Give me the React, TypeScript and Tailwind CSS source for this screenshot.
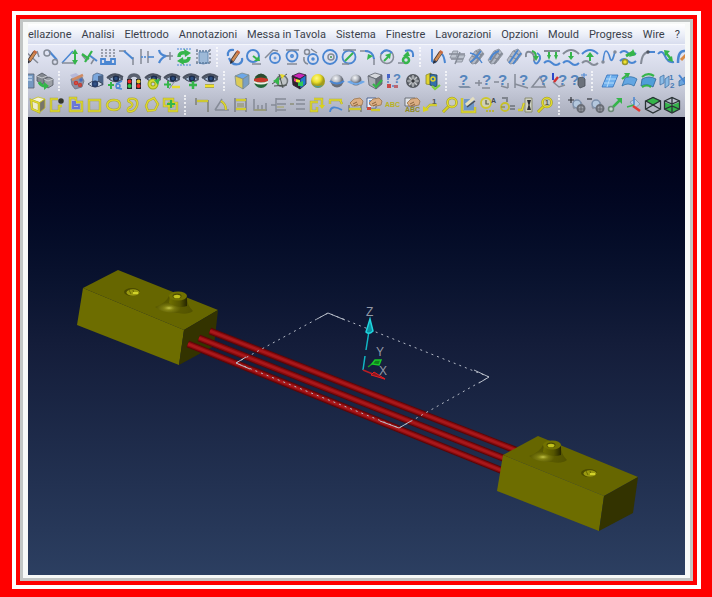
import type { ReactNode } from "react";

type Tool = {
  label: string;
  art: ReactNode;
};

const BLUE = "#4a86d2";
const GRAY = "#858b97";
const GREEN = "#35b54a";
const YELLOW = "#d9d31c";
const OLIVE = "#98952c";

const Line = ({ d, c = BLUE, w = 1.5, dash }: { d: string; c?: string; w?: number; dash?: string }) => (
  <path d={d} fill="none" stroke={c} strokeWidth={w} strokeDasharray={dash} />
);

const Fill = ({ d, c = BLUE, s }: { d: string; c?: string; s?: string }) => (
  <path d={d} fill={c} stroke={s} strokeWidth={s ? 0.8 : undefined} />
);

const Ring = ({ x, y, r, c = BLUE, f = "none", w = 1.5 }: { x: number; y: number; r: number; c?: string; f?: string; w?: number }) => (
  <circle cx={x} cy={y} r={r} fill={f} stroke={c} strokeWidth={w} />
);

const Label = ({ x, y, size, c, children }: { x: number; y: number; size: number; c: string; children: string }) => (
  <text x={x} y={y} fontSize={size} fill={c} fontWeight="bold" fontFamily="Liberation Sans, sans-serif">
    {children}
  </text>
);

const Pencil = () => (
  <>
    <Line d="M6 13L12 4" c="#4b3a33" w={4} />
    <Line d="M6.500 12.500L12 4.500" c="#d08a52" w={2.500} />
    <Line d="M11.500 5L12.800 3" c="#c9683f" w={3.500} />
    <Fill d="M4 16l.5-4 3 2z" c="#2c2c34" />
  </>
);

const Eye = () => (
  <>
    <Fill d="M1 6Q8-2 17 5L17 8Q13 11 8 10Q4 9 1 6z" c="#5f6777" />
    <Fill d="M3 7Q9 2 16 7Q10 12 3 7z" c="#a9c0dc" s="#3a4253" />
    <Ring x={10} y={6.500} r={2.500} c="#1d2c4a" f="#2b4d80" />
    <Line d="M1 6Q8-1 17 5" c="#4a5160" w={1.800} />
  </>
);

const Cube = ({ top = "#d5d7dc", left = "#a9acb4", right = "#6c7078", edge = "#5e636d" }) => (
  <>
    <Fill d="M2 4L9 1L16 3L10 7z" c={top} s={edge} />
    <Fill d="M2 4L10 7V17L3 13z" c={left} s={edge} />
    <Fill d="M10 7L16 3V12L10 17z" c={right} s={edge} />
  </>
);

const Hand = () => (
  <>
    <Fill d="M4 7L8 3L14 2L17 5L16 9L11 10L6 10L5 8z" c="#dcae83" s="#9b754e" />
    <Line d="M7 8L11 6M8 10L12 8" c="#8a643e" w={1} />
  </>
);

const Wave = ({ y, c = BLUE }: { y: number; c?: string }) => (
  <Line d={`M1 ${y}q4 -4 8 0t8 0`} c={c} w={2} />
);

const Band = ({ c }: { c: string }) => (
  <>
    <Fill d="M2 12L8 3L13 1L17 6L10 15L5 16z" c="#b4bac6" s={GRAY} />
    <Line d="M5 8L13 12M9 3L15 8" c={GRAY} w={1.200} />
    <Line d="M4 15L13 2M8 16L16 5" c={c} w={1.800} />
  </>
);

const Lens = () => (
  <>
    <Line d="M8 10L2 16" c={OLIVE} w={3} />
    <Line d="M8 10L2 16" c={YELLOW} w={1.800} />
    <Ring x={11} y={6.500} r={4.500} c={OLIVE} f="#c7c9c2" w={2.500} />
    <Ring x={11} y={6.500} r={4.500} c="#e3dc2a" w={1.500} />
  </>
);

const Gears = () => (
  <>
    <Line d="M5 12L14 7" c="#8e939d" w={3} />
    <Ring x={9} y={8} r={4} c="#7c90ab" f="#b4c8de" />
    <Ring x={13} y={12.500} r={3.500} c="#6a6e77" f="#a4a8b0" w={2} />
    <Line d="M13 9V17M9 13H17" c="#62666f" w={1} />
  </>
);

const Yellow = ({ d }: { d: string }) => (
  <>
    <Line d={d} c="#a5a23c" w={2.400} />
    <Line d={d} c="#e0d92c" w={1.400} />
  </>
);

const Query = ({ x }: { x: number }) => (
  <Label x={x} y={13} size={15} c="#5585bd">
    ?
  </Label>
);

const rowOne: Tool[][] = [
  [
    { label: "Schizzo", art: <><Line d="M3 4L15 15M14 3L16 9" c={GRAY} /><Pencil /></> },
    { label: "Linea tangente", art: <><Line d="M7 3L15 12" w={2} /><Ring x={5} y={5} r={3} c={GRAY} /><Ring x={13} y={14} r={2.500} c={GRAY} /></> },
    { label: "Linea ad angolo", art: <><Line d="M1 15L12 3" /><Line d="M1 15H14" c={GRAY} /><Line d="M14 4V14" c={GREEN} w={2} /><Fill d="M11 6L14 1L17 6zM11 12L14 17L17 12z" c={GREEN} /></> },
    { label: "Normale", art: <><Line d="M9 7L17 13" w={2} /><Line d="M2 7L7 13M14 11L11 16" c={GRAY} /><Line d="M2 6L9 11M5 14L12 3" c={GREEN} w={2.200} /></> },
    { label: "Parallele", art: <><Line d="M3 1V10M7 1V10M11 1V10M15 1V10" c={GRAY} dash="2 1" /><Line d="M2 16V11H6V14H12V11H16V16z" w={1.800} /></> },
    { label: "Smusso", art: <><Line d="M1 3H8M15 9V17" c={GRAY} /><Line d="M6 3L15 11" w={2} /></> },
    { label: "Taglia", art: <><Line d="M4 1V16M11 3V15" c={GRAY} /><Line d="M4 9H10" dash="2 1" /><Line d="M11 9H17" w={1.600} /></> },
    { label: "Unisci", art: <><Line d="M3 2Q4 7 10 8Q5 10 3 15" w={2.200} /><Line d="M10 8H17M14 4V12" c={GRAY} /></> },
    { label: "Rigenera", art: <><Line d="M2 1H16M2 17H16" dash="2 1" w={1} /><Line d="M4 9Q4 4 10 5M14 9Q14 14 8 13" c={GREEN} w={3.500} /><Fill d="M9 1L16 5L10 9zM9 17L2 13L8 9z" c={GREEN} /></> },
    { label: "Solido", art: <><Fill d="M5 4H14V15Q9 17 5 15z" c="#9db9d8" s="#557da9" /><Line d="M2 3H17M2 15H17" c="#5e7c9e" dash="2 1" /><Line d="M3 1V17M16 1V17" c={GRAY} dash="2 2" /></> },
  ],
  [
    { label: "Disegna cerchio", art: <><Line d="M8 2Q1 1 2 8M3 10Q6 18 13 16Q17 14 16 10" w={2.200} /><Pencil /></> },
    { label: "Cerchio centro", art: <><Ring x={8} y={8} r={6} w={2} /><Line d="M8 8L12 11" c={GREEN} w={2} /><Fill d="M9 13L15 13L14 8z" c={GREEN} /><Line d="M7 16H16" c={GRAY} /></> },
    { label: "Cerchio tangente", art: <><Ring x={11} y={10} r={5} w={1.800} /><Ring x={11} y={10} r={1} w={1} /><Line d="M1 10L9 2L14 3" c={GRAY} /></> },
    { label: "Cerchio due linee", art: <><Ring x={9} y={8} r={5.500} w={1.800} /><Ring x={9} y={8} r={1.200} /><Line d="M3 2H16M4 16H14" c={GRAY} /></> },
    { label: "Cerchio tre cerchi", art: <><Ring x={11} y={11} r={5} w={1.800} /><Ring x={11} y={11} r={1} /><Ring x={5} y={4} r={2.500} c={GRAY} /><Line d="M2 9Q1 15 6 16M9 1L15 5" c={GRAY} /></> },
    { label: "Cerchi concentrici", art: <><Ring x={9} y={9} r={7} w={1.800} /><Ring x={10} y={9} r={3} c={GRAY} /><Fill d="M9 8h2v2h-2z" c="#69a874" /></> },
    { label: "Diametro", art: <><Ring x={9} y={9} r={6.500} w={1.800} /><Line d="M5 13L13 5" c={GREEN} w={2} /><Line d="M3 2H16M2 16H9" c={GRAY} /></> },
    { label: "Raccordo", art: <><Line d="M1 3H9M15 10V17" c={GRAY} /><Line d="M6 3Q14 3 15 11" w={2} /><Fill d="M8 12L9 6L14 8z" c={GREEN} /></> },
    { label: "Raggio", art: <><Ring x={9} y={9} r={6.500} c={GRAY} /><Line d="M3 6Q8-1 14 5" w={2} /><Line d="M6 13L10 9" c={GREEN} w={2} /><Fill d="M7 7L13 5L12 11z" c={GREEN} /></> },
    { label: "Arco", art: <><Line d="M8 3Q17 0 16 9" w={2} /><Ring x={9} y={12} r={3} c={GREEN} w={2.500} /><Fill d="M6 8L11 3L13 8z" c={GREEN} /><Line d="M1 15H7" c={GRAY} /></> },
  ],
  [
    { label: "Disegna curva", art: <><Line d="M3 1V13Q7 17 9 9Q14 1 16 15" w={2} /><Pencil /></> },
    { label: "Superficie", art: <><Fill d="M5 3H10L8 10H2zM10 7H17L14 14H8z" c="#bdc3ce" s={GRAY} /><Line d="M1 6H17M3 11H15M12 4L7 16" c={GRAY} /></> },
    { label: "Intersezione", art: <><Band c={GRAY} /><Line d="M3 5Q10 6 15 15M14 3Q8 12 3 14" /></> },
    { label: "Sezione", art: <><Band c={GRAY} /><Line d="M4 12Q6 5 13 3" w={2} /></> },
    { label: "Isoparametriche", art: <Band c={BLUE} /> },
    { label: "Proietta", art: <><Line d="M2 9Q1 3 6 4T10 13" c={GRAY} w={2} /><Line d="M10 13Q12 18 15 13Q18 8 13 5" w={2} /><Line d="M8 3Q12 4 12 9" c={GREEN} w={2} /><Fill d="M9 8H15L12 13z" c={GREEN} /></> },
    { label: "Offset curva", art: <><Line d="M1 3H17" c={GRAY} w={2} /><Wave y={15} /><Line d="M6 4V8M13 4V8" c={GREEN} w={2} /><Fill d="M4 7H8L6 12zM11 7H15L13 12z" c={GREEN} /></> },
    { label: "Abbassa curva", art: <><Line d="M1 6Q9-2 17 6" c={GRAY} w={2} /><Wave y={15} /><Line d="M9 4V8" c={GREEN} w={2} /><Fill d="M6 8H12L9 12z" c={GREEN} /></> },
    { label: "Alza curva", art: <><Line d="M1 6Q9-2 17 6" w={2} /><Wave y={15} c={GRAY} /><Line d="M9 8V13" c={GREEN} w={2} /><Fill d="M5 9H13L9 4z" c={GREEN} /></> },
    { label: "Spline", art: <><Line d="M3 15Q4 3 6 3Q8 3 10 10T15 3" w={1.700} /><Ring x={3} y={14} r={1} c={GRAY} /><Ring x={15} y={4} r={1} c={GRAY} /></> },
    { label: "Modifica spline", art: <><Wave y={5} /><Wave y={13} /><Ring x={6} y={14} r={2.500} c={OLIVE} f="#f0e42e" /><Line d="M7 8L14 4" c={GREEN} w={3} /><Fill d="M10 9L17 7L14 1z" c={GREEN} /></> },
    { label: "Estendi", art: <><Line d="M3 16Q4 4 11 4" c={GRAY} w={2} /><Line d="M11 4H17" w={2} /><Ring x={10} y={4} r={1} c="#4d535f" /></> },
    { label: "Allunga curva", art: <><Line d="M1 6Q5 1 8 8T17 14" w={2} /><Line d="M9 5L14 11" c={GREEN} w={2.500} /><Fill d="M7 2L13 3L8 8zM16 14L10 12L15 8z" c={GREEN} /></> },
    { label: "Modifica curva", art: <><Line d="M2 15Q2 2 9 3" w={2.500} /><Line d="M5 12L10 7" c="#d98a45" w={3} /></> },
  ],
];

const rowTwo: Tool[][] = [
  [
    { label: "Finestra", art: <><Fill d="M8 2H17V16H8z" c="#7699c2" s="#59616e" /><Line d="M10 5H15M10 8H15" c="#bdd3eb" /></> },
    { label: "Sposta solido", art: <><Fill d="M1 4L6 1L11 4V9L6 12L1 9z" c="#83888f" s="#50565f" /><Fill d="M8 7L13 5L17 7V13L12 16L8 13z" c="#9b9fa5" s="#50565f" /><Line d="M1 4L6 6L11 4M8 7L12 9L17 7" c="#c8cbd0" w={1} /><Line d="M3 10Q5 14 9 14" c={GREEN} w={3} /><Fill d="M8 10L13 14L8 18z" c={GREEN} /></> },
  ],
  [
    { label: "Colori", art: <><Fill d="M3 7L14 5L16 9L14 15L7 17L4 13z" c="#8b8fa3" s="#6a7080" /><Fill d="M2 3L8 1L13 5L5 7z" c="#b6b9da" /><Line d="M4 8L15 3" c="#cf8a62" w={2.500} /><Ring x={8} y={11} r={1.500} c="#c63931" f="#ef6a63" /><Ring x={12} y={13} r={1.500} c="#b9433c" f="#dd5549" /><Ring x={13} y={8} r={1} c="#446dbd" /></> },
    { label: "Vista solido", art: <><Fill d="M6 3L10 1L16 3V13L5 14z" c="#7ba7dd" s="#56698a" /><Fill d="M11 4L16 3V13H11z" c="#4c6488" /><Fill d="M1 12Q8 6 16 12Q8 18 1 12z" c="#ccd9eb" s="#303747" /><Ring x={8} y={12} r={2.500} c="#253b68" f="#315387" /></> },
    { label: "Mostra tutto", art: <><Eye /><Line d="M5 10V17M2 13H8" c={GREEN} w={2} /><Ring x={12} y={14} r={2} /><Line d="M10 12L16 9M10 16L16 17" /></> },
    { label: "Semaforo", art: <><Line d="M4 8Q4 3 9 3T14 8" c="#59606f" w={3.500} /><Fill d="M2 7H7V17H2zM11 7H16V17H11z" c="#20252a" /><Ring x={4.500} y={9.500} r={1.300} c="#ef2c27" f="#ef2c27" /><Ring x={13.500} y={9.500} r={1.300} c="#e8c52a" f="#e8c52a" /><Ring x={4.500} y={14} r={1.300} c="#31c44a" f="#31c44a" /><Ring x={13.500} y={14} r={1.300} c="#ef2c27" f="#ef2c27" /></> },
    { label: "Aggiorna vista", art: <><Eye /><Ring x={9} y={12} r={3.500} c="#9aa61c" w={4} /><Ring x={9} y={12} r={3.500} c="#d6dc35" w={2} /><Fill d="M10 8L16 7L14 13z" c={GREEN} /></> },
    { label: "Mostra e nascondi", art: <><Eye /><Line d="M5 9V16M1 12.500H8" c={GREEN} w={2} /><Line d="M6 17L12 9" c={GRAY} w={1} /><Line d="M9 15H17" c="#e5da2d" w={2.500} /></> },
    { label: "Mostra", art: <><Eye /><Line d="M11 9V17M7 13H15" c={GREEN} w={2.500} /></> },
    { label: "Nascondi", art: <><Eye /><Line d="M4 14H13" c={OLIVE} w={3.500} /><Line d="M4 14H13" c="#f0e12d" w={2.200} /></> },
  ],
  [
    { label: "Blocco", art: <Cube top="#6ca7e8" left="#dccb57" right="#7a9fc4" edge="#7b8a8a" /> },
    { label: "Sfera a fasce", art: <><circle cx="9" cy="9" r="7" fill="#24683a" /><Fill d="M3 5Q9-2 15 5Q9 7 3 5z" c="#2c4a2f" /><Fill d="M2 7Q9 4 16 7V9Q9 12 2 9z" c="#c8382c" /><Fill d="M2 9Q9 12 16 9V11Q9 14 2 11z" c="#f1efe4" /></> },
    { label: "Rotazione", art: <><Ring x={11} y={9} r={5.500} c="#6e7478" f="#bfc4c6" /><Line d="M1 12L16 2M3 14L16 13M8 2L12 16" c="#4b524f" w={1} /><Fill d="M2 9L8 5V13z" c={GREEN} /><Fill d="M9 2L14 3L11 7z" c="#e9dd2a" /></> },
    { label: "Analisi colore", art: <><Cube top="#cb28b8" left="#31262e" right="#2577cd" edge="#28212e" /><Fill d="M4 6L6 7V10L4 9z" c="#f23b8b" /><Fill d="M6 7L10 8V11L6 10z" c="#eee52c" /><Fill d="M8 11L13 9V14H8z" c="#2fc759" /></> },
    { label: "Ombreggiato", art: <><circle cx="9" cy="9" r="7" fill="url(#ballYellow)" /><Fill d="M4 13Q9 15 14 13Q12 16 9 16T4 13z" c="#4f9a9a" /></> },
    { label: "Semitrasparente", art: <><circle cx="9" cy="9" r="6.5" fill="url(#ballGray)" /><Line d="M2 9Q9 14 16 9" w={2} /></> },
    { label: "Piano di sezione", art: <><circle cx="9" cy="8" r="5.5" fill="url(#ballGray)" /><Fill d="M0 10Q3 8 4 9Q9 13 14 9Q16 8 18 10Q9 16 0 10z" c="#6fa8e8" /></> },
    { label: "Controlla", art: <><Cube /><Line d="M7 12L10 15L16 8" c={GREEN} w={2.200} /></> },
    { label: "Verifica punti", art: <><Line d="M3 3V14H13" c="#5b7fc4" dash="2 1" /><Fill d="M2 2H5V6H2z" c="#4665c8" /><Fill d="M2 12H6V16H2z" c="#c84a4a" /><Label x={8} y={11} size={13} c="#5585bd">?</Label><Fill d="M9 13H13V16H9z" c="#bb6670" /></> },
    { label: "Ventola", art: <><Ring x={9} y={9} r={6} c="#53575e" f="#7b8086" w={2} /><Line d="M9 3V15M3 9H15M5 5L13 13M5 13L13 5" c="#c6c8cc" w={1.200} /><Ring x={9} y={9} r={1} c="#34373b" f="#34373b" /></> },
    { label: "Quote solido", art: <><Fill d="M3 3L8 1V13L3 12z" c="#e1d32c" s="#8a8c2c" /><Fill d="M7 2L14 3V15L7 13z" c="#3471a9" s="#27405b" /><Ring x={10} y={7} r={2} c="#e1d32c" /><Line d="M9 14L12 17L17 13" c="#7fce42" w={2.200} /></> },
  ],
  [
    { label: "Informazioni", art: <><Fill d="M3 14H14L16 16H5z" c="#8090a6" /><Query x={4} /></> },
    { label: "Info punto", art: <><Query x={8} /><Line d="M1 11H8M5 8V14M8 16H16" c={GRAY} /></> },
    { label: "Info assi", art: <><Query x={5} /><Line d="M1 10L6 10M8 14L15 16M15 11V16" c={GRAY} /></> },
    { label: "Info angolo", art: <><Query x={7} /><Line d="M3 2V16M3 12L16 16" c={GRAY} /></> },
    { label: "Info triangolo", art: <><Line d="M1 15L9 5L14 15z" c={GRAY} /><Query x={8} /></> },
    { label: "Info direzione", art: <><Query x={8} /><Line d="M3 1V8" c="#2b48c9" w={2} /><Line d="M3 10L9 15L15 13" c={GRAY} /><Line d="M4 10L8 5" c="#d42f30" w={2.500} /></> },
    { label: "Info solido", art: <><Fill d="M9 6L14 5L16 7V14L11 16L9 13z" c="#6b717b" s="#464c56" /><Query x={1} /><Line d="M15 1V6M12 3H18" w={1} /></> },
  ],
  [
    { label: "Piano", art: <><Fill d="M6 3H17L12 15H1z" c="#6fb0ee" s="#2e70bb" /><Line d="M5 7H15M3 11H13M10 3L6 15" c="#b5dbfa" w={1} /></> },
    { label: "Estrudi superficie", art: <><Fill d="M5 6Q11 3 17 7L14 14Q8 10 2 14z" c="#63a6e2" s="#3070a8" /><Line d="M2 7L7 3" c={GREEN} w={2.200} /><Fill d="M4 1H10L8 6z" c={GREEN} /></> },
    { label: "Superficie di raccordo", art: <><Fill d="M3 7Q10 3 17 7L14 15Q8 11 2 14z" c="#4f9ed8" s="#2e6597" /><Line d="M3 5Q9 0 15 4M3 15Q8 12 12 15" c={GREEN} w={2.200} /></> },
    { label: "Ordine superfici", art: <><Fill d="M2 5L6 3V11L2 13zM7 7L11 4V13L7 16z" c="#8bbbe5" s="#4175a8" /><Label x={11} y={8} size={8} c="#4679b5">1</Label><Label x={12} y={16} size={8} c="#4679b5">2</Label></> },
    { label: "Unisci superfici", art: <><Fill d="M2 9L8 5V12L2 14z" c="#6aa4dd" s="#3c6f9f" /><Line d="M2 3L10 13" w={2} /></> },
  ],
];

const rowThree: Tool[][] = [
  [
    { label: "Parallelepipedo", art: <><Cube top="#f4f3dc" left="#eeeccd" right="#77756a" edge="#c9c322" /><Yellow d="M2 4L10 7V16L3 13z" /></> },
    { label: "Profilo foro", art: <><Yellow d="M10 3H3V15H11V10H14" /><Ring x={13} y={5} r={2} c="#34362d" f="#34362d" /></> },
    { label: "Profilo a L", art: <><Yellow d="M3 2H9V6H15V15H3z" /><Line d="M6 5V12H12V9H8V5" c="#6472da" w={1.800} /></> },
    { label: "Rettangolo", art: <Yellow d="M3 4H14V15H3z" /> },
    { label: "Ellisse", art: <Yellow d="M2 9Q3 4 9 4T15 9Q15 14 9 14T2 9z" /> },
    { label: "Asola curva", art: <Yellow d="M5 3Q15 1 13 10Q10 17 4 15Q3 12 7 11Q10 8 6 6Q3 5 5 3z" /> },
    { label: "Poligono", art: <Yellow d="M5 5L11 2L15 8L12 14L5 15L3 10z" /> },
    { label: "Aggiungi profilo", art: <><Yellow d="M2 3H11V10H2zM7 7H15V15H7z" /><Line d="M9 4V12M5 8H13" c={GREEN} w={2.200} /></> },
  ],
  [
    { label: "Quota lineare", art: <><Line d="M2 2V9M14 4V16" c="#7d8076" /><Yellow d="M3 5H14" /></> },
    { label: "Quota angolare", art: <><Line d="M2 14L9 3M2 14H16" c={GRAY} /><Yellow d="M8 5Q13 8 13 14" /></> },
    { label: "Quota doppia", art: <><Line d="M3 2V16M14 2V16" c="#7d8086" /><Yellow d="M4 4H14M4 13H14" /><Line d="M5 8H12M5 10H12" c="#8f8d55" w={1} /></> },
    { label: "Quote ordinate", art: <><Line d="M3 3V14H16M7 9V14M11 9V14M15 7V15" c={GRAY} /><Line d="M3 14H15" c="#a8a65c" w={1} /></> },
    { label: "Quote allineate", art: <><Line d="M6 2V16M1 9H6M6 3H16M7 8H16M6 14H16" c={GRAY} w={1.400} /><Line d="M7 11H14" c="#a8a65c" w={1} /></> },
    { label: "Elenco quote", art: <><Line d="M7 4H16M7 8H16M7 13H16" c={GRAY} w={1.400} /><Line d="M1 8H5" c="#8c8f78" /></> },
    { label: "Quota profilo", art: <><Yellow d="M6 3H14V10M10 6H3V15H9V11" /><Fill d="M11 9H17L14 13z" c={YELLOW} /></> },
    { label: "Quota arco", art: <><Line d="M3 16Q4 8 15 14" w={1.800} /><Yellow d="M2 4H15M3 4V8M13 4L15 8" /></> },
    { label: "Modifica quota", art: <><Line d="M3 9V16M15 9V16" c="#7d8076" /><Yellow d="M3 13H15" /><Hand /></> },
    { label: "Modifica foglio", art: <><Fill d="M2 2H11V12H2z" c="#edf1f8" s="#314b80" /><Line d="M4 5H9M4 8H8" /><Fill d="M2 11H6V14H2z" c="#cc493c" /><Hand /><Yellow d="M6 14H15" /></> },
    { label: "Testo", art: <Label x={1} y={11} size={7} c="#b9b21d">ABC</Label> },
    { label: "Modifica testo", art: <><Fill d="M2 2H12V10H2z" c="#e0e3e8" s="#555b63" /><Hand /><Label x={2} y={16} size={7} c="#8f8a1c">ABC</Label></> },
    { label: "Nota", art: <><Label x={10} y={8} size={8} c="#4a4e55">1</Label><Yellow d="M4 13L8 9H15" /><Fill d="M1 10L7 14L1 16z" c={YELLOW} /></> },
    { label: "Cerca quota", art: <Lens /> },
    { label: "Tolleranza", art: <><Fill d="M4 3H14V14H4z" c="#6d97c9" /><Yellow d="M2 2V16H15V11" /><Line d="M6 9L14 2" c="#e4dfc0" w={3} /><Line d="M7 11L15 5" c="#4a4f58" /></> },
    { label: "Rugosità", art: <><Ring x={7} y={7} r={5} c="#cdc72b" f="#d0d0b5" w={1.800} /><Line d="M7 4V8H10" c="#5b5e45" w={1.200} /><Label x={12} y={7} size={7} c="#41454f">A</Label><Line d="M7 15H16" c="#b9b43a" w={2} dash="2 1" /></> },
    { label: "Saldatura", art: <><Ring x={7} y={11} r={4} c="#c6c02b" w={1.800} /><Line d="M4 2H8M9 1V6M12 10H17M12 13H17" c="#6c7179" /><Line d="M3 11H7" c="#969444" /></> },
    { label: "Foro in tavola", art: <><Fill d="M8 2H15V16H8z" c="#d0d2c4" s="#7b7d5c" /><Fill d="M10 4H14L12.500 9L14 14H10L11.500 9z" c="#303235" /><Yellow d="M1 14H5L7 7" /></> },
    { label: "Dettaglio", art: <><Lens /><Label x={9} y={9} size={7} c="#555743">1</Label></> },
  ],
  [
    { label: "Aggiungi lavorazione", art: <><Gears /><Line d="M3 1V7M0 4H6" c="#303238" w={1.200} /></> },
    { label: "Togli lavorazione", art: <><Gears /><Line d="M0 3H5" c="#303238" w={1.200} /></> },
    { label: "Collega punti", art: <><Line d="M5 13L14 4" c={GREEN} w={2.500} /><Fill d="M10 2H16V8z" c={GREEN} /><Ring x={5} y={13} r={2.500} c="#6c8a77" f="#c5d9cc" /></> },
    { label: "Piano di lavoro", art: <><Fill d="M5 6L10 3L15 8L10 12z" c="#b9cee4" s="#7c92ac" /><Line d="M9 9V1" w={1.500} /><Line d="M9 9L2 11" c={GREEN} w={1.500} /><Line d="M8 10L15 15" c="#e03a34" w={2.500} /></> },
    { label: "Faccia superiore", art: <><Fill d="M1 5L9 1L17 5L9 9z" c={GREEN} /><Line d="M1.500 5L9 1.500L16.500 5V13L9 17L1.500 13zM2 13L9 9L16 13M2 5L9 9L16 5" c="#2a3336" w={1.300} /></> },
    { label: "Facce laterali", art: <><Fill d="M1 6L9 9V17L1 13zM9 9L17 6V13L9 17z" c={GREEN} /><Line d="M1.500 5L9 1.500L16.500 5V13L9 17L1.500 13zM2 5L9 8L16 5M9 2V16M2 13L9 10L16 13" c="#2a3336" w={1.300} /></> },
  ],
];

const menus = [
  "ellazione",
  "Analisi",
  "Elettrodo",
  "Annotazioni",
  "Messa in Tavola",
  "Sistema",
  "Finestre",
  "Lavorazioni",
  "Opzioni",
  "Mould",
  "Progress",
  "Wire",
  "?",
];

const ToolRow = ({ groups, className }: { groups: Tool[][]; className: string }) => (
  <div className={`flex h-6 items-center ${className}`}>
    {groups.map((group, i) => (
      <div key={i} className="flex shrink-0 items-center">
        {i > 0 && (
          <span className="flex w-[13px] justify-start pl-1">
            <span className="h-5 border-l-2 border-dotted border-white/70" />
          </span>
        )}
        {group.map((tool) => (
          <button
            key={tool.label}
            type="button"
            aria-label={tool.label}
            className="flex h-6 w-[19px] shrink-0 items-center justify-center hover:bg-white/50"
          >
            <svg viewBox="0 0 18 18" className="size-[18px] overflow-visible" aria-hidden="true">
              {tool.art}
            </svg>
          </button>
        ))}
      </div>
    ))}
  </div>
);

// Upper face of each insert carries a boss and a dimple
const Boss = ({ x, y }: { x: number; y: number }) => (
  <g transform={`translate(${x} ${y})`}>
    <path d="M-23 11Q-12 7-9 0L9 2Q9 9 15 15Q10 19 0 17Q-17 17-23 11z" fill="url(#boss)" />
    <path d="M-8 0L-9 7Q0 13 9 10V1z" fill="url(#neck)" />
    <ellipse cx="0" cy="0" rx="9" ry="4.500" fill="#727200" />
    <ellipse cx="-1" cy="0" rx="4.500" ry="2.500" fill="#4c4c00" />
    <ellipse cx="-1" cy="0.500" rx="3.500" ry="1.800" fill="#c2c21c" />
    <ellipse cx="-9" cy="12" rx="7" ry="3" fill="url(#shine)" />
  </g>
);

const Dimple = ({ x, y }: { x: number; y: number }) => (
  <g>
    <ellipse cx={x} cy={y} rx="8" ry="4" fill="#4b4b00" />
    <ellipse cx={x + 1} cy={y + 0.5} rx="6.500" ry="3.200" fill="#9a9a10" />
    <path d={`M${x - 3} ${y - 2}l2 4M${x + 1} ${y - 2}l1 4`} stroke="#6a6a00" />
    <path d={`M${x + 1} ${y + 1}h5`} stroke="#d2d22a" strokeWidth="2" />
  </g>
);

const tubes = ["M210 331L518 451", "M199 338L508 460", "M188 344L503 471"];

const Model = () => (
  <svg
    viewBox="28 117 657 458"
    preserveAspectRatio="xMidYMid meet"
    className="h-full w-full"
    role="img"
    aria-label="Modello 3D"
  >
    <defs>
      <radialGradient id="boss" cx="35%" cy="70%" r="65%">
        <stop offset="0" stopColor="#93931c" />
        <stop offset="0.500" stopColor="#5a5a00" />
        <stop offset="1" stopColor="#525200" />
      </radialGradient>
      <radialGradient id="shine">
        <stop offset="0" stopColor="#c8c850" />
        <stop offset="1" stopColor="#777700" stopOpacity="0" />
      </radialGradient>
      <linearGradient id="neck">
        <stop offset="0" stopColor="#707000" />
        <stop offset="0.600" stopColor="#555500" />
        <stop offset="1" stopColor="#252500" />
      </linearGradient>
    </defs>

    <path d="M83 288L118 270L218 310L184 330z" fill="#666600" />
    <path d="M83 288L184 330L179 365L77 325z" fill="#6d6d00" />
    <path d="M184 330L218 310L214 346L179 365z" fill="#333300" />
    <Dimple x={132} y={292} />
    <Boss x={178} y={296} />

    {tubes.map((d) => (
      <g key={d} fill="none">
        <path d={d} stroke="#5c0608" strokeWidth="7" />
        <path d={d} stroke="#8c0c0f" strokeWidth="5" />
        <path d={d} stroke="#a8181b" strokeWidth="2.500" />
      </g>
    ))}

    <path d="M503 455L538 436L638 477L604 496z" fill="#666600" />
    <path d="M503 455L604 496L599 531L497 491z" fill="#6d6d00" />
    <path d="M604 496L638 477L633 513L599 531z" fill="#333300" />
    <Boss x={552} y={445} />
    <Dimple x={589} y={473} />

    <g fill="none" stroke="#b4bac6">
      <path d="M236 363L328 313L489 377L399 428z" strokeDasharray="2 4" />
      <path d="M246 357L236 363L250 369M317 319L328 313L345 320M474 370L489 377L479 383M380 421L399 428L411 421" />
    </g>

    <g fill="none" strokeWidth="1.500">
      <path d="M363 370L365 356M366 350L369 331" stroke="#12b5c3" />
      <path d="M370 319L366 332Q369 335 373 331z" fill="#0c91a0" stroke="#20d5df" />
      <path d="M363 370L385 379" stroke="#b81e24" />
      <path d="M371 375L374 372L385 379z" fill="#8d161c" stroke="#e02127" strokeWidth="1" />
      <path d="M368 367L372 364" stroke="#1b9c26" />
      <path d="M372 364L375 360H381L379 365z" fill="#117f1d" stroke="#18ca29" />
    </g>
    <g fill="#9398a6" fontFamily="Liberation Sans, sans-serif" fontSize="12">
      <text x="366" y="316">Z</text>
      <text x="376" y="356">Y</text>
      <text x="379" y="375">X</text>
    </g>
  </svg>
);

const App = () => {
  return (
    <div className="flex h-screen flex-col bg-[#ff0000] pt-[11px] pr-[11px] pb-2 pl-3">
      <svg className="absolute size-0" aria-hidden="true">
        <defs>
          <radialGradient id="ballYellow" cx="40%" cy="30%">
            <stop offset="0" stopColor="#fff98a" />
            <stop offset="0.600" stopColor="#ece02a" />
            <stop offset="1" stopColor="#a39c1c" />
          </radialGradient>
          <radialGradient id="ballGray" cx="40%" cy="30%">
            <stop offset="0" stopColor="#f6f7f9" />
            <stop offset="0.600" stopColor="#b4b8c1" />
            <stop offset="1" stopColor="#686d78" />
          </radialGradient>
        </defs>
      </svg>
      <div className="flex min-h-0 flex-1 flex-col bg-white p-1">
        <div className="flex min-h-0 flex-1 flex-col bg-[#ff0000] p-1">
          <div className="flex min-h-0 flex-1 flex-col border-3 border-[#c2c6c5] bg-[#f7f9f8] px-[5px] pt-0.5 pb-[3px]">
            <header className="shrink-0 overflow-hidden">
              <nav className="flex h-5 items-center gap-[10px] overflow-hidden bg-linear-to-b from-white via-[#edf0f9] to-[#d8ddee] pt-0.5 font-['Roboto',sans-serif] text-[11px] text-[#3a3f4b]">
                {menus.map((item) => (
                  <button key={item} type="button" className="shrink-0 whitespace-nowrap hover:text-black">
                    {item}
                  </button>
                ))}
              </nav>
              <div className="overflow-hidden border-t border-[#f4f6fc] bg-linear-to-b from-[#e6e9f7] via-[#cdd1e0] to-[#a9adbc]">
                <ToolRow groups={rowOne} className="-ml-1.5" />
                <ToolRow groups={rowTwo} className="-ml-3" />
                <ToolRow groups={rowThree} className="ml-0" />
              </div>
            </header>
            <main className="min-h-0 flex-1 bg-linear-to-b from-[#000014] via-[#141d3a] to-[#2c3f61]">
              <Model />
            </main>
          </div>
        </div>
      </div>
    </div>
  );
};

export default App;
